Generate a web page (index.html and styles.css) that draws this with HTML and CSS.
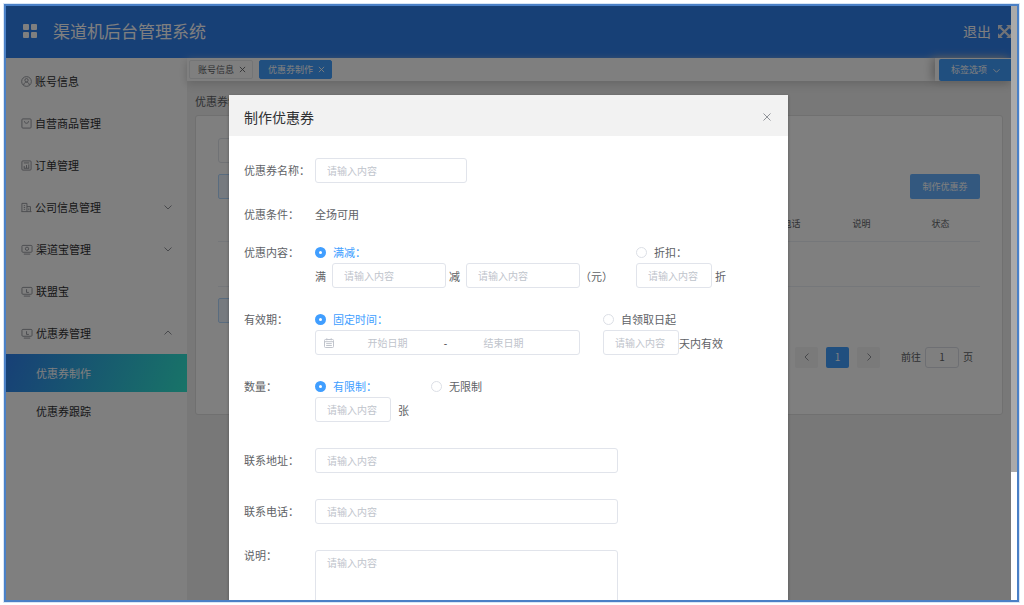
FILE: index.html
```html
<!DOCTYPE html>
<html lang="zh-Hans">

<head>
    <meta charset="utf-8">
    <meta name="viewport" content="width=device-width, initial-scale=1.0">
    <title>渠道机后台管理系统</title>
    <link rel="stylesheet" href="styles.css">
</head>

<body>
    <div class="window">
        <div class="screen">
            <header class="header">
                <svg class="menu-icon" viewBox="0 0 14 14">
                    <rect x="0" y="0" width="6" height="6" rx="1" />
                    <rect x="8" y="0" width="6" height="6" rx="1" />
                    <rect x="0" y="8" width="6" height="6" rx="1" />
                    <rect x="8" y="8" width="6" height="6" rx="1" />
                </svg>
                <h1>渠道机后台管理系统</h1>
                <a class="logout" href="#">退出</a>
                <svg class="full-icon" viewBox="0 0 12 12">
                    <path class="cross" d="M2 2l8 8M10 2l-8 8" />
                    <path class="corner" d="M0 0h4.5L0 4.5zM12 0v4.5L7.5 0zM12 12H7.5L12 7.5zM0 12V7.5L4.5 12z" />
                </svg>
            </header>

            <div class="body">
                <nav class="sidebar">
                    <a class="menu" href="#">
                        <svg class="icon" viewBox="0 0 12 12"><circle cx="6" cy="6" r="5.3" /><circle cx="6" cy="4.6" r="1.8" /><path d="M3 9.8c0-4 6-4 6 0" /></svg>
                        账号信息
                    </a>
                    <a class="menu" href="#">
                        <svg class="icon" viewBox="0 0 12 12"><rect x="1" y="1" width="10" height="10" rx="1" /><path d="M3.8 3.5c0 3 4.4 3 4.4 0" /></svg>
                        自营商品管理
                    </a>
                    <a class="menu" href="#">
                        <svg class="icon" viewBox="0 0 12 12"><rect x="1" y="1" width="10" height="10" rx="1" /><path d="M3 3.2h6M3.5 9V6.5M6 9V5.5M8.5 9V4.8M3 9h6" /></svg>
                        订单管理
                    </a>
                    <a class="menu" href="#">
                        <svg class="icon" viewBox="0 0 12 12"><path d="M1 10.5V1.5h5.5v9M6.5 5h3.8v5.5M0.5 10.5h11M3 4h1.5M3 6h1.5M3 8h1.5M8.5 7v2" /></svg>
                        公司信息管理
                        <svg class="arrow" viewBox="0 0 8 8"><path d="M0.5 2.5l3.5 3.5 3.5-3.5" /></svg>
                    </a>
                    <a class="menu" href="#">
                        <svg class="icon wide" viewBox="0 0 13 12"><rect x="1" y="1.5" width="11" height="7.5" rx="1" /><circle cx="6.5" cy="5.2" r="1.8" /><path d="M3 11h7" /></svg>
                        渠道宝管理
                        <svg class="arrow" viewBox="0 0 8 8"><path d="M0.5 2.5l3.5 3.5 3.5-3.5" /></svg>
                    </a>
                    <a class="menu" href="#">
                        <svg class="icon wide" viewBox="0 0 13 12"><rect x="1" y="1.5" width="11" height="7.5" rx="1" /><path d="M3 11h7M6 3.5V7h2.5" /></svg>
                        联盟宝
                    </a>
                    <a class="menu" href="#">
                        <svg class="icon wide" viewBox="0 0 13 12"><rect x="1" y="1.5" width="11" height="7.5" rx="1" /><path d="M3 11h7M6 3.5V7h2.5" /></svg>
                        优惠券管理
                        <svg class="arrow" viewBox="0 0 8 8"><path d="M0.5 5.5l3.5-3.5 3.5 3.5" /></svg>
                    </a>
                    <a class="submenu active" href="#">优惠券制作</a>
                    <a class="submenu" href="#">优惠券跟踪</a>
                </nav>

                <main class="main">
                    <div class="tabs">
                        <a class="tab" href="#">账号信息<svg viewBox="0 0 8 8"><path d="M1 1l6 6M7 1l-6 6" /></svg></a>
                        <a class="tab active" href="#">优惠券制作<svg viewBox="0 0 8 8"><path d="M1 1l6 6M7 1l-6 6" /></svg></a>
                        <div class="tab-option">
                            <button type="button">标签选项<svg viewBox="0 0 8 8"><path d="M0.5 2.5l3.5 3.5 3.5-3.5" /></svg></button>
                        </div>
                    </div>
                    <p class="crumb">优惠券制作</p>
                    <section class="card">
                        <input class="input" type="text" aria-label="搜索">
                        <div class="toolbar">
                            <button class="btn plain" type="button" aria-label="全选"></button>
                            <button class="btn" type="button">制作优惠券</button>
                        </div>
                        <table>
                            <thead>
                                <tr>
                                    <th class="rest"></th>
                                    <th>联系电话</th>
                                    <th>说明</th>
                                    <th>状态</th>
                                </tr>
                            </thead>
                            <tbody>
                                <tr><td colspan="4"></td></tr>
                            </tbody>
                        </table>
                        <div class="toolbar">
                            <button class="btn plain" type="button" aria-label="全选"></button>
                        </div>
                        <div class="pager">
                            <button type="button" aria-label="上一页"><svg viewBox="0 0 8 8"><path d="M5.5 0.5L2 4l3.5 3.5" /></svg></button>
                            <button class="current" type="button">1</button>
                            <button type="button" aria-label="下一页"><svg viewBox="0 0 8 8"><path d="M2.5 0.5L6 4 2.5 7.5" /></svg></button>
                            <label class="jump">前往<input type="text" value="1">页</label>
                        </div>
                    </section>
                </main>
            </div>

            <!-- 弹窗 -->
            <div class="mask">
                <form class="dialog">
                    <div class="dialog-header">
                        <h2>制作优惠券</h2>
                        <button class="close" type="button" aria-label="关闭"><svg viewBox="0 0 8 8"><path d="M0.5 0.5l7 7M7.5 0.5l-7 7" /></svg></button>
                    </div>
                    <div class="dialog-body">
                        <div class="item name">
                            <label class="label" for="name">优惠券名称：</label>
                            <input class="input" id="name" type="text" placeholder="请输入内容">
                        </div>
                        <div class="item text">
                            <span class="label">优惠条件：</span>
                            <span>全场可用</span>
                        </div>
                        <div class="item group">
                            <span class="label">优惠内容：</span>
                            <div>
                                <label class="radio"><input type="radio" name="content" checked><span>满减：</span></label>
                                <div class="line">
                                    <label for="full">满</label>
                                    <input class="input mid" id="full" type="text" placeholder="请输入内容">
                                    <label class="minus" for="minus">减</label>
                                    <input class="input mid" id="minus" type="text" placeholder="请输入内容">
                                    <span>（元）</span>
                                </div>
                            </div>
                            <div>
                                <label class="radio"><input type="radio" name="content"><span>折扣：</span></label>
                                <div class="line">
                                    <input class="input small" id="discount" type="text" placeholder="请输入内容">
                                    <label class="unit" for="discount">折</label>
                                </div>
                            </div>
                        </div>
                        <div class="item group">
                            <span class="label">有效期：</span>
                            <div>
                                <label class="radio"><input type="radio" name="time" checked><span>固定时间：</span></label>
                                <div class="range">
                                    <svg viewBox="0 0 10 10"><rect x="0.5" y="1.5" width="9" height="8" rx="1" /><path d="M0.5 3.7h9M2.8 0.3v2M7.2 0.3v2M2.2 5.6h5.6M2.2 7.5h5.6" /></svg>
                                    <input type="text" placeholder="开始日期" aria-label="开始日期">
                                    <span>-</span>
                                    <input type="text" placeholder="结束日期" aria-label="结束日期">
                                </div>
                            </div>
                            <div>
                                <label class="radio"><input type="radio" name="time"><span>自领取日起</span></label>
                                <div class="line">
                                    <input class="input small" id="days" type="text" placeholder="请输入内容">
                                    <label for="days">天内有效</label>
                                </div>
                            </div>
                        </div>
                        <div class="item amount">
                            <span class="label">数量：</span>
                            <div>
                                <div class="radios">
                                    <label class="radio"><input type="radio" name="amount" checked><span>有限制：</span></label>
                                    <label class="radio"><input type="radio" name="amount"><span>无限制</span></label>
                                </div>
                                <div class="line">
                                    <input class="input small" id="count" type="text" placeholder="请输入内容">
                                    <label class="piece" for="count">张</label>
                                </div>
                            </div>
                        </div>
                        <div class="item">
                            <label class="label" for="address">联系地址：</label>
                            <input class="input long" id="address" type="text" placeholder="请输入内容">
                        </div>
                        <div class="item">
                            <label class="label" for="phone">联系电话：</label>
                            <input class="input long" id="phone" type="text" placeholder="请输入内容">
                        </div>
                        <div class="item remark">
                            <label class="label" for="remark">说明：</label>
                            <textarea class="input long" id="remark" placeholder="请输入内容"></textarea>
                        </div>
                    </div>
                </form>
            </div>
        </div>
        <div class="scrollbar">
            <div class="thumb"></div>
        </div>
    </div>
</body>

</html>
```
FILE: styles.css
```css
* {
    box-sizing: border-box;
}

body {
    margin: 0;
    padding: 4px 5px 3px 4px;
    height: 100vh;
    overflow: hidden;
    background: #fff;
    color: #606266;
    font: 11px/22px "Noto Sans CJK SC", sans-serif;
}

a {
    color: inherit;
    text-decoration: none;
}

button,
input,
textarea {
    font: inherit;
    color: inherit;
}

button {
    border: none;
    padding: 0;
    cursor: pointer;
}

svg {
    fill: none;
    stroke: currentColor;
    flex: none;
}

.window {
    display: flex;
    height: 100%;
    overflow: hidden;
    border: 2px solid #4a80c6;
    box-shadow: 0 0 0 1px #d9e6f5;
}

.screen {
    position: relative;
    flex: 1;
    display: flex;
    flex-direction: column;
    overflow: hidden;
}

.scrollbar {
    width: 6px;
    background: #fff;
}

.thumb {
    height: 78.5%;
    background: #aaa;
}

/* 顶部 */
.header {
    display: flex;
    align-items: center;
    flex: none;
    height: 52px;
    padding: 0 0 2px 17px;
    background: #2f80ed;
    color: #fff;
}

.menu-icon {
    width: 14px;
    height: 14px;
    fill: #fff;
    stroke: none;
}

.header h1 {
    flex: 1;
    margin: 0 0 0 16px;
    font-size: 17px;
    font-weight: normal;
}

.logout {
    font-size: 14px;
    margin-right: 7px;
}

.full-icon {
    width: 13px;
    height: 13px;
    color: #e4e7ed;
}

.full-icon .cross {
    stroke-width: 2;
}

.full-icon .corner {
    fill: currentColor;
    stroke: none;
}

/* 左侧菜单 */
.body {
    flex: 1;
    display: flex;
    min-height: 0;
}

.sidebar {
    flex: none;
    width: 181px;
    padding-top: 2px;
    background: #fff;
    color: #303133;
}

.menu {
    display: flex;
    align-items: center;
    gap: 3px;
    height: 42px;
    padding: 0 15px;
}

.icon {
    width: 11px;
    height: 11px;
    color: #909399;
}

.icon.wide {
    width: 12px;
}

.arrow {
    width: 8px;
    height: 8px;
    margin-left: auto;
    color: #909399;
}

.submenu {
    display: block;
    padding-left: 30px;
    line-height: 38px;
}

.submenu.active {
    background: linear-gradient(110deg, #2f80ed, #30e8d0);
    color: #fff;
}

/* 主区域 */
.main {
    flex: 1;
    min-width: 0;
    background: #f0f0f0;
}

.tabs {
    display: flex;
    align-items: center;
    gap: 6px;
    height: 23px;
    padding-left: 2px;
    background: #fff;
    box-shadow: 0 3px 8px #ccc;
    font-size: 9px;
}

.tab {
    display: flex;
    align-items: center;
    gap: 5px;
    height: 19px;
    padding: 0 6px 0 8px;
    border: 1px solid #e9eaec;
    border-radius: 2px;
}

.tab.active {
    border-color: #409eff;
    background: #409eff;
    color: #fff;
}

.tab svg,
.tab-option svg {
    width: 7px;
    height: 7px;
}

.tab-option {
    align-self: stretch;
    margin-left: auto;
    padding: 1px 0 0 4px;
    box-shadow: -3px 0 10px #bbb;
}

.tab-option button {
    display: flex;
    align-items: center;
    gap: 6px;
    height: 22px;
    padding: 0 11px 0 12px;
    border-radius: 2px 0 0 2px;
    background: #409eff;
    color: #fff;
}

.crumb {
    margin: 9px 8px 3px;
}

.card {
    margin: 0 8px;
    padding: 22px 22px 46px;
    border: 1px solid #e0e0e0;
    border-radius: 3px;
    background: #fff;
}

.toolbar {
    display: flex;
    justify-content: space-between;
    margin-top: 11px;
}

.btn {
    height: 25px;
    width: 70px;
    border-radius: 2px;
    background: #66b1ff;
    color: #fff;
    font-size: 9px;
}

.btn.plain {
    border: 1px solid #b3d8ff;
    background: #ecf5ff;
}

table {
    width: 100%;
    margin-top: 9px;
    border-collapse: collapse;
    table-layout: fixed;
    font-size: 9px;
}

th {
    width: 79px;
    height: 33px;
    padding: 0;
    border-bottom: 1px solid #ebeef5;
    font-weight: normal;
}

th.rest {
    width: auto;
}

td {
    height: 45px;
    border-bottom: 1px solid #ebeef5;
}

.pager {
    display: flex;
    justify-content: flex-end;
    gap: 8px;
    margin-top: 24px;
    padding-right: 7px;
    font-size: 10px;
}

.pager button {
    display: flex;
    align-items: center;
    justify-content: center;
    width: 23px;
    height: 21px;
    border-radius: 2px;
    background: #f4f4f5;
}

.pager button.current {
    background: #409eff;
    color: #fff;
}

.pager svg {
    width: 8px;
    height: 8px;
    color: #909399;
}

.jump {
    display: flex;
    align-items: center;
    gap: 4px;
    height: 21px;
    margin-left: 13px;
}

.jump input {
    width: 34px;
    height: 21px;
    padding: 0;
    border: 1px solid #dcdfe6;
    border-radius: 3px;
    background: #fff;
    text-align: center;
}

/* 弹窗 */
.mask {
    position: absolute;
    inset: 0;
    overflow: hidden;
    background: rgba(0, 0, 0, 0.5);
}

.dialog {
    width: 559px;
    max-width: 96%;
    margin: 89px auto 0;
    background: #fff;
    box-shadow: 0 1px 3px rgba(0, 0, 0, 0.3);
}

.dialog-header {
    display: flex;
    align-items: center;
    justify-content: space-between;
    height: 41px;
    padding: 2px 17px 0 15px;
    background: #f2f2f2;
}

.dialog-header h2 {
    margin: 0;
    color: #303133;
    font-size: 14px;
    font-weight: normal;
}

.close {
    display: flex;
    background: none;
    color: #909399;
}

.close svg {
    width: 8px;
    height: 8px;
}

.dialog-body {
    padding: 22px 15px;
}

.item {
    display: flex;
    margin-bottom: 26px;
    line-height: 24px;
}

.item.name {
    margin-bottom: 20px;
}

.item.text {
    margin-bottom: 16px;
    line-height: 22px;
}

.item.group {
    margin-bottom: 20px;
    line-height: 22px;
}

.item.amount {
    line-height: 22px;
}

.item.group > div + div {
    margin-left: 23px;
}

.item.remark {
    line-height: 11px;
}

.label {
    flex: none;
    width: 71px;
}

.input {
    width: 152px;
    height: 25px;
    padding: 0 11px;
    border: 1px solid #e1e4eb;
    border-radius: 3px;
    background: #fff;
    font-size: 10px;
}

.input.small {
    width: 76px;
}

.input.mid {
    width: 114px;
}

.input.long {
    width: 303px;
}

textarea.input {
    height: 90px;
    padding-top: 6px;
    resize: none;
}

::placeholder {
    color: #c0c4cc;
}

.line {
    display: flex;
    align-items: center;
    height: 25px;
}

.line label + .input {
    margin-left: 6px;
}

.minus,
.unit {
    margin-left: 3px;
}

.piece {
    margin-left: 7px;
}

.radios {
    display: flex;
    gap: 54px;
}

.radio {
    display: flex;
    align-items: center;
    gap: 7px;
    height: 22px;
}

.radio input {
    appearance: none;
    width: 11px;
    height: 11px;
    margin: 0;
    border: 1px solid #dcdfe6;
    border-radius: 50%;
    background: #fff;
}

.radio input:checked {
    border: 4px solid #409eff;
}

.radio input:checked + span {
    color: #409eff;
}

.range {
    display: flex;
    align-items: center;
    width: 265px;
    height: 25px;
    padding: 0 22px 0 8px;
    border: 1px solid #e1e4eb;
    border-radius: 3px;
    font-size: 10px;
}

.range svg {
    width: 10px;
    height: 10px;
    color: #c0c4cc;
}

.range input {
    flex: 1;
    min-width: 0;
    padding: 0;
    border: none;
    text-align: center;
}

.range span {
    width: 9px;
    text-align: center;
    color: #303133;
}
```
